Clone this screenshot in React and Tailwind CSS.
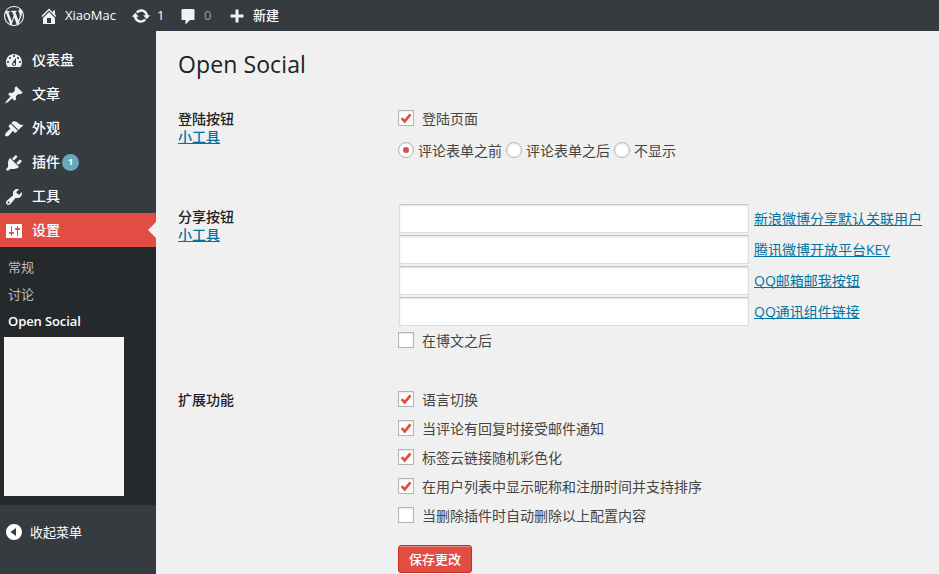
import React from "react";

const paths = {
  wordpress:
    "M20 10c0-5.51-4.49-10-10-10C4.48 0 0 4.49 0 10c0 5.52 4.48 10 10 10 5.51 0 10-4.48 10-10zM7.78 15.37L4.37 6.22c.55-.02 1.17-.08 1.17-.08.5-.06.44-1.13-.06-1.11 0 0-1.45.11-2.37.11-.18 0-.37 0-.58-.01C4.12 2.69 6.87 1.11 10 1.11c2.33 0 4.45.87 6.05 2.34-.68-.11-1.65.39-1.65 1.58 0 .74.45 1.36.9 2.1.35.61.55 1.36.55 2.46 0 1.49-1.4 5-1.4 5l-3.03-8.37c.54-.02.82-.17.82-.17.5-.05.44-1.25-.06-1.22 0 0-1.44.12-2.38.12-.87 0-2.33-.12-2.33-.12-.5-.03-.56 1.2-.06 1.22l.92.08 1.26 3.41zM17.41 10c.24-.64.74-1.87.43-4.25.7 1.29 1.05 2.71 1.05 4.25 0 3.29-1.73 6.24-4.4 7.78.97-2.59 1.94-5.2 2.92-7.78zM6.1 18.09C3.12 16.65 1.11 13.53 1.11 10c0-1.3.23-2.48.72-3.59C3.25 10.3 4.67 14.2 6.1 18.09zm4.03-6.63l2.58 6.98c-.86.29-1.76.45-2.71.45-.79 0-1.57-.11-2.29-.33.81-2.38 1.62-4.74 2.42-7.1z",
  home: "M16 8.5l1.53 1.53-1.06 1.06L10 4.6l-6.47 6.49-1.06-1.06L10 2.5l4 4v-2h2v4zm-6-2.46l6 5.99V18H4v-5.97zM12 17v-5H8v5h4z",
  update:
    "M10.2 3.28c3.53 0 6.43 2.61 6.92 6h2.08l-3.5 4-3.5-4h2.32c-.45-1.97-2.21-3.45-4.32-3.45-1.45 0-2.73.71-3.54 1.78L4.95 5.66C6.23 4.2 8.11 3.28 10.2 3.28zm-.4 13.44c-3.52 0-6.43-2.61-6.92-6H.8l3.5-4c1.17 1.33 2.33 2.67 3.5 4H5.48c.45 1.97 2.21 3.45 4.32 3.45 1.45 0 2.73-.71 3.54-1.78l1.71 1.95c-1.28 1.46-3.15 2.38-5.25 2.38z",
  comment: "M4.500 3h11c.6 0 1 .4 1 1v9c0 .6-.4 1-1 1H12l-4.500 4.500V14h-3c-.6 0-1-.4-1-1V4c0-.6.4-1 1-1z",
  plus: "M16.500 8.500v3h-5v5h-3v-5h-5v-3h5v-5h3v5h5z",
  dashboard:
    "M3.76 16h12.48c1.1-1.37 1.76-3.11 1.76-5 0-4.42-3.58-8-8-8s-8 3.58-8 8c0 1.89.66 3.63 1.76 5zM10 4c.55 0 1 .45 1 1s-.45 1-1 1-1-.45-1-1 .45-1 1-1zM6 6c.55 0 1 .45 1 1s-.45 1-1 1-1-.45-1-1 .45-1 1-1zm8 0c.55 0 1 .45 1 1s-.45 1-1 1-1-.45-1-1 .45-1 1-1zm-5.37 5.55L12 7v6c0 1.1-.9 2-2 2s-2-.9-2-2c0-.57.24-1.08.63-1.45zM4 10c.55 0 1 .45 1 1s-.45 1-1 1-1-.45-1-1 .45-1 1-1zm12 0c.55 0 1 .45 1 1s-.45 1-1 1-1-.45-1-1 .45-1 1-1zm-5 3c0-.55-.45-1-1-1s-1 .45-1 1 .45 1 1 1 1-.45 1-1z",
  pin: "M10.44 3.02l1.82-1.82 6.36 6.35-1.83 1.82c-1.05-.68-2.48-.57-3.41.36l-.75.75c-.92.93-1.04 2.35-.35 3.41l-1.83 1.82-2.41-2.41-2.8 2.79c-.42.42-3.38 2.71-3.8 2.29s1.86-3.39 2.28-3.81l2.79-2.79L4.1 9.36l1.83-1.82c1.05.69 2.48.57 3.4-.36l.75-.75c.93-.92 1.05-2.35.36-3.41z",
  brush:
    "M14.48 11.06L7.41 3.99l1.5-1.5c.5-.56 2.3-.47 3.51.32 1.21.8 1.43 1.28 2.91 2.1 1.18.64 2.45 1.26 4.45.85zm-.71.71L6.7 4.7 4.93 6.47c-.39.39-.39 1.02 0 1.41l1.06 1.06c.39.39.39 1.03 0 1.42-.6.6-1.43 1.11-2.21 1.69-.35.26-.7.53-1.01.84C1.43 14.23.4 16.08 1.4 17.07c.99 1 2.84-.03 4.18-1.36.31-.31.58-.66.85-1.02.57-.78 1.08-1.61 1.69-2.21.39-.39 1.02-.39 1.41 0l1.06 1.06c.39.39 1.02.39 1.41 0z",
  plug: "M13.11 4.36L9.87 7.6 8 5.73l3.24-3.24c.35-.34 1.05-.2 1.56.32.52.51.66 1.21.31 1.55zm-8 1.77l.91-1.12 9.01 9.01-1.19.84c-.71.71-2.63 1.16-3.82 1.16H6.14L4.9 17.26c-.59.59-1.54.59-2.12 0-.59-.58-.59-1.53 0-2.12l1.24-1.24v-3.88c0-1.13.4-3.19 1.09-3.89zm7.26 3.97l3.24-3.24c.34-.35 1.04-.21 1.55.31.52.51.66 1.21.31 1.55l-3.24 3.25z",
  wrench:
    "M16.68 9.77c-1.34 1.34-3.3 1.67-4.95.99l-5.41 6.52c-.99.99-2.59.99-3.58 0s-.99-2.59 0-3.57l6.52-5.42c-.68-1.65-.35-3.61.99-4.95 1.28-1.28 3.12-1.62 4.72-1.06l-2.89 2.89 2.82 2.82 2.86-2.87c.53 1.58.18 3.39-1.08 4.65zM3.81 16.21c.4.39 1.04.39 1.43 0 .4-.4.4-1.04 0-1.43-.39-.4-1.03-.4-1.43 0-.39.39-.39 1.03 0 1.43z",
  settings:
    "M18 16V4c0-.55-.45-1-1-1H3c-.55 0-1 .45-1 1v12c0 .55.45 1 1 1h14c.55 0 1-.45 1-1zM8 11h1c.55 0 1 .45 1 1s-.45 1-1 1H8v1.5c0 .28-.22.5-.5.5s-.5-.22-.5-.5V13H6c-.55 0-1-.45-1-1s.45-1 1-1h1V5.5c0-.28.22-.5.5-.5s.5.22.5.5V11zm5-2h-1c-.55 0-1-.45-1-1s.45-1 1-1h1V5.5c0-.28.22-.5.5-.5s.5.22.5.5V7h1c.55 0 1 .45 1 1s-.45 1-1 1h-1v5.5c0 .28-.22.5-.5.5s-.5-.22-.5-.5V9z",
  collapse: "M10 2a8 8 0 1 0 0 16 8 8 0 0 0 0-16zM12 6v8l-5.500-4z",
};

function Icon({ name, className = "size-5" }) {
  return (
    <svg viewBox="0 0 20 20" fill="currentColor" fillRule="evenodd" className={`shrink-0 ${className}`}>
      <path d={paths[name]} />
    </svg>
  );
}

const menu = [
  { icon: "dashboard", label: "仪表盘" },
  { icon: "pin", label: "文章" },
  { icon: "brush", label: "外观" },
  { icon: "plug", label: "插件", badge: 1 },
  { icon: "wrench", label: "工具" },
];

function Checkbox({ checked, children }) {
  return (
    <label className="flex h-[29px] items-center gap-2">
      <span className="flex size-4 shrink-0 items-center justify-center border border-[#b4b4b4] bg-white text-[#e14d43] shadow-[inset_0_1px_2px_rgba(0,0,0,0.1)]">
        {checked && (
          <svg viewBox="0 0 14 14" className="size-3.5 shrink-0" fill="none" stroke="currentColor" strokeWidth="2.700">
            <path d="M2.700 7.200l3 3.200 5.800-7" />
          </svg>
        )}
      </span>
      <span className="pt-0.5">{children}</span>
    </label>
  );
}

function Radio({ checked, children }) {
  return (
    <label className="flex items-center gap-1">
      <span className="flex size-4 shrink-0 items-center justify-center rounded-full border border-[#b4b4b4] bg-white shadow-[inset_0_1px_2px_rgba(0,0,0,0.1)]">
        {checked && <span className="size-1.5 rounded-full bg-[#e14d43]" />}
      </span>
      <span className="pt-0.5">{children}</span>
    </label>
  );
}

function RowTitle({ title, link }) {
  return (
    <div className="w-[220px] shrink-0 font-medium leading-[18px] text-[#222]">
      <div>{title}</div>
      {link && <a className="block text-[#0074a2] underline [text-decoration-skip-ink:none]">{link}</a>}
    </div>
  );
}

const links = ["新浪微博分享默认关联用户", "腾讯微博开放平台KEY", "QQ邮箱邮我按钮", "QQ通讯组件链接"];

export default function App() {
  return (
    <div className="flex h-[574px] w-[939px] flex-col overflow-hidden bg-[#f0f0f0] font-['Open_Sans','Noto_Sans_CJK_SC',sans-serif] text-sm leading-[18px] text-[#444]">
      <header className="flex h-[31px] shrink-0 items-center bg-[#363b3f] pl-1 text-[13px] text-[#f1f2f3]">
        <Icon name="wordpress" />
        <Icon name="home" className="ml-[15px] size-5" />
        <span className="ml-1.5 w-[52px] pb-0.5 text-white">XiaoMac</span>
        <Icon name="update" className="ml-[14px] size-5" />
        <span className="ml-1.5 w-2 pb-0.5 text-white">1</span>
        <Icon name="comment" className="ml-[13px] size-5" />
        <span className="ml-1.5 w-2 pb-0.5 text-[#999ca0]">0</span>
        <Icon name="plus" className="ml-[15px] size-5" />
        <span className="ml-1.5 pb-0.5 font-medium text-white">新建</span>
      </header>
      <div className="flex min-h-0 grow">
        <nav className="flex w-[156px] shrink-0 flex-col bg-[#363b3f] pt-3 text-white">
          {menu.map((m) => (
            <a key={m.label} className="flex h-[34px] shrink-0 items-center gap-2 pl-1">
              <Icon name={m.icon} className="mt-px size-5 text-[#f1f2f3]" />
              <span className="font-medium">{m.label}</span>
              {m.badge && (
                <span className="-ml-1.5 flex size-[17px] items-center justify-center rounded-full bg-[#69a8bb] text-[9px] font-bold">
                  {m.badge}
                </span>
              )}
            </a>
          ))}
          <a className="flex h-[34px] shrink-0 items-center gap-2 bg-[#e14d43] pl-1">
            <Icon name="settings" className="mt-px size-5" />
            <span className="font-medium">设置</span>
            <span className="ml-auto border-y-8 border-r-8 border-y-transparent border-r-[#f0f0f0]" />
          </a>
          <div className="flex h-[258px] shrink-0 flex-col bg-[#26292c] pt-1.5 text-[13px] text-[#bebfc0]">
            <a className="flex h-[27px] items-center pl-2">常规</a>
            <a className="flex h-[27px] items-center pl-2">讨论</a>
            <a className="flex h-[27px] items-center pl-2 font-semibold tracking-[-0.1px] text-white">Open Social</a>
            <div className="ml-1 mt-[3px] h-[159px] w-[120px] bg-[#f4f4f4]" />
          </div>
          <a className="mt-[10px] flex h-[34px] shrink-0 items-center gap-1.5 pl-1 text-[13px]">
            <Icon name="collapse" />
            <span>收起菜单</span>
          </a>
        </nav>
        <main className="flex grow flex-col pl-[22px]">
          <h1 className="mt-[19px] h-[29px] text-[23px] leading-[29px] tracking-[0.1px] text-[#222]">Open Social</h1>
          <section className="flex h-[98px] shrink-0 pt-[31px]">
            <RowTitle title="登陆按钮" link="小工具" />
            <div className="-mt-[7px]">
              <Checkbox checked>登陆页面</Checkbox>
              <div className="mt-2 flex gap-1">
                <Radio checked>评论表单之前</Radio>
                <Radio>评论表单之后</Radio>
                <Radio>不显示</Radio>
              </div>
            </div>
          </section>
          <section className="flex h-[183px] shrink-0 pt-[31px]">
            <RowTitle title="分享按钮" link="小工具" />
            <div className="-mt-[4px]">
              {links.map((l) => (
                <div key={l} className="flex h-[31px] items-start">
                  <input className="ml-px h-[29px] w-[350px] border border-[#ddd] border-t-[#c4c4c4] bg-white shadow-[inset_0_1px_2px_rgba(0,0,0,0.12)]" />
                  <a className="ml-[5px] mt-[6px] text-[#0074a2] underline [text-decoration-skip-ink:none]">{l}</a>
                </div>
              ))}
              <div className="-mt-[3px]">
                <Checkbox>在博文之后</Checkbox>
              </div>
            </div>
          </section>
          <section className="flex shrink-0 pt-[31px]">
            <RowTitle title="扩展功能" />
            <div className="-mt-[7px]">
              <Checkbox checked>语言切换</Checkbox>
              <Checkbox checked>当评论有回复时接受邮件通知</Checkbox>
              <Checkbox checked>标签云链接随机彩色化</Checkbox>
              <Checkbox checked>在用户列表中显示昵称和注册时间并支持排序</Checkbox>
              <Checkbox>当删除插件时自动删除以上配置内容</Checkbox>
              <button className="mt-4 flex h-7 w-[74px] items-center justify-center rounded-[3px] border border-[#d02a21] bg-[#e14d43] text-[13px] font-medium text-white shadow-[inset_0_1px_0_#ec8a85]">
                保存更改
              </button>
            </div>
          </section>
        </main>
      </div>
    </div>
  );
}
